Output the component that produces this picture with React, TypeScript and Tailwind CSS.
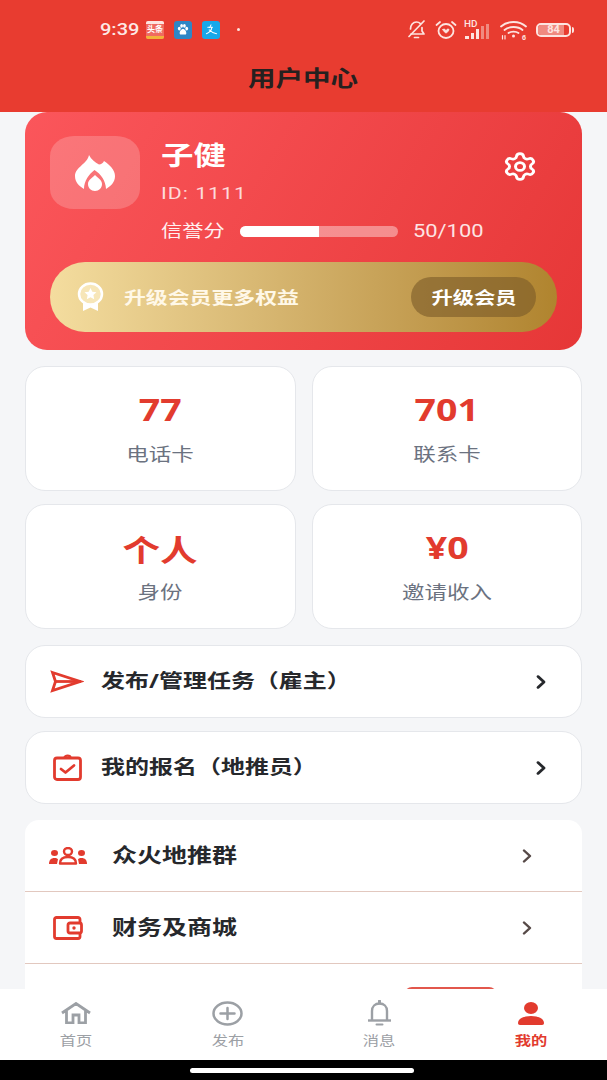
import { ChevronRight, Settings } from "lucide-react";
import { JSX } from "react";

const cjk = "font-['Noto_Sans','Noto_Sans_CJK_SC',sans-serif]";
// the screenshot is stretched sideways, text needs the same stretch
const wideLeft = "inline-block origin-left scale-x-125 whitespace-nowrap";
const wideCenter = "inline-block scale-x-125 whitespace-nowrap";

const StatusIcons = () => (
  <div className="flex items-center text-white">
    <svg width="19" height="19" viewBox="0 0 19 19" fill="none" stroke="#fde4e0" strokeWidth="1.700" strokeLinecap="round" strokeLinejoin="round">
      <path d="M3.500 9c0-4 2.500-7 6-7 1.600 0 2.900.6 3.900 1.600M15 7.500V11l2 3H4" />
      <path d="M7.500 17.500h4M2 16.500 17 1" />
    </svg>
    <svg className="ml-[9px]" width="22" height="20" viewBox="0 0 22 20" fill="none" stroke="#fde4e0" strokeWidth="1.800" strokeLinecap="round">
      <ellipse cx="11" cy="11" rx="7.500" ry="7" />
      <path d="M1.500 5 5 2M20.500 5 17 2" />
      <path d="M8 9.500c1.200-1 2.200 0 3 1 .8-1 1.800-2 3-1-.5 2-2 3-3 3.500-1-.5-2.500-1.500-3-3.500Z" fill="#fde4e0" strokeWidth="1" />
    </svg>
    <div className="relative ml-[7px] h-[20px] w-[28px]">
      <span className="absolute left-0 top-[-1px] inline-block origin-left scale-x-110 text-[9px] font-medium leading-[10px] text-[#fde4e0] font-['Roboto',sans-serif]">HD</span>
      <div className="absolute bottom-[1px] left-[1px] flex items-end gap-[2px]">
        <span className="h-[3px] w-[4px] bg-[#fde4e0]" />
        <span className="h-[6px] w-[3px] bg-[#fde4e0]" />
        <span className="h-[10px] w-[3px] bg-[#fde4e0]" />
        <span className="h-[13px] w-[3px] bg-[#f08a80]" />
        <span className="h-[15px] w-[3px] bg-[#f08a80]" />
      </div>
    </div>
    <svg className="ml-[8px]" width="27" height="20" viewBox="0 0 27 20" fill="none" stroke="#fde4e0" strokeWidth="1.800" strokeLinecap="round">
      <path d="M1 6.500c6.500-6 18.500-6 25 0M4.500 10c4.500-4 13.500-4 18 0M8.500 13c2.500-1.800 7.500-1.800 10 0" />
      <circle cx="13.500" cy="16" r="1.500" fill="#fde4e0" stroke="none" />
      <text x="22" y="19.500" fontSize="7" fontWeight="700" fill="#fde4e0" stroke="none">6</text>
      <path d="M2.500 19v-3.500M5 15.500V19" strokeWidth="1.200" />
    </svg>
    <div className="ml-[9px] flex items-center">
      <div className="relative flex h-[14px] w-[35px] items-center overflow-hidden rounded-[5px] border-2 border-[#fde4e0]">
        <span className="h-full w-[26px] bg-[#f08a80]" />
        <span className="absolute inset-0 text-center text-[11px] font-bold leading-[10px] text-[#fde4e0] font-['Roboto',sans-serif]">84</span>
      </div>
      <span className="ml-[1px] h-[6px] w-[2px] rounded-r bg-[#fde4e0]" />
    </div>
  </div>
);

const StatusBar = () => (
  <div className="flex h-[58px] items-center justify-between pl-[100px] pr-[33px] pt-[1px]">
    <div className="flex items-center">
      <span className="w-[41px] text-[16px] font-medium text-[#fde9e6] font-['Roboto',sans-serif]">
        <span className={wideLeft}>9:39</span>
      </span>
      <div className="ml-[5px] flex h-[18px] w-[18px] flex-col overflow-hidden rounded-[2px] bg-[#f06a60]">
        <span className="h-[3px] bg-[#fde4e0]" />
        <span className="flex-1 text-center text-[8px] font-bold leading-[10px] text-white">头条</span>
        <span className="h-[3px] bg-[#f2b23a]" />
      </div>
      <div className="ml-[10px] flex h-[18px] w-[18px] items-center justify-center rounded-[3px] bg-[#2f86c6]">
        <svg width="14" height="13" viewBox="0 0 14 14" fill="#fff">
          <ellipse cx="3" cy="6" rx="1.500" ry="2" />
          <ellipse cx="5.500" cy="3" rx="1.500" ry="2" />
          <ellipse cx="8.500" cy="3" rx="1.500" ry="2" />
          <ellipse cx="11" cy="6" rx="1.500" ry="2" />
          <path d="M7 6.500c2 0 4 3 3.500 5-.4 1.500-2.500.8-3.500.8s-3.100.7-3.500-.8C3 9.500 5 6.500 7 6.500Z" />
        </svg>
      </div>
      <div className="ml-[10px] flex h-[18px] w-[18px] items-center justify-center rounded-[3px] bg-[#17a8ea]">
        <svg width="15" height="13" viewBox="0 0 14 14" fill="none" stroke="#fff" strokeWidth="1.100" strokeLinecap="round">
          <path d="M6.500 2 5 5M3 4.500h5M7.500 4.500C7 8 4.500 10.500 1.500 11.500M4.500 7.500c2 2 4.500 3.500 8 4" />
        </svg>
      </div>
      <span className="ml-[17px] h-[3px] w-[3px] rounded-full bg-[#fde4e0]" />
    </div>
    <StatusIcons />
  </div>
);

const FlameLogo = () => (
  <svg width="40" height="36" viewBox="0 0 40 36" fill="#fff">
    <path d="M14 0c2 4 6 7.500 10 9.500 2.200 0 4-1.200 5-3.500 6 4 11 9 11 15 0 6-4 10-9 13-.2-8-5-15-11.500-19C14 19 9 26 9 34c-5-3-9-7-9-13C0 12 12.500 9 14 0Z" />
    <path d="M20 20c2.500 2.500 7 5 7 9 0 4-3 7-7 7s-7-3-7-7c0-4 4.500-6.500 7-9Z" />
  </svg>
);

const Medal = () => (
  <svg width="27" height="30" viewBox="0 0 27 30" fill="none">
    <path d="M6 18v11l7.500-3.500L21 29V18Z" fill="#fff" />
    <ellipse cx="13.500" cy="12" rx="11.500" ry="10.500" fill="#f7e6b8" stroke="#fff" strokeWidth="2.500" />
    <path d="m13.500 6 1.800 3.800 4.200.5-3.100 2.800.8 4.100-3.700-2-3.700 2 .8-4.100-3.100-2.800 4.200-.5Z" fill="#fff" />
  </svg>
);

const ProfileCard = () => (
  <div className="rounded-[22px] bg-[linear-gradient(120deg,#fb565b,#e63737)] px-[25px] pt-[24px] pb-[18px]">
    <div className="flex">
      <div className="flex h-[73px] w-[90px] shrink-0 items-center justify-center rounded-[24px/20px] bg-white/20">
        <FlameLogo />
      </div>
      <div className="ml-[21px] flex-1">
        <div className="flex items-start justify-between">
          <div>
            <div className="text-[26px] font-bold leading-[38px] text-white">
              <span className={wideLeft}>子健</span>
            </div>
            <div className="mt-[7px] text-[17px] leading-[24px] tracking-[0.800px] text-[#fddada] font-['Roboto',sans-serif]">
              <span className={wideLeft}>ID: 1111</span>
            </div>
          </div>
          <Settings className="mr-[19px] mt-[15px] h-[31px] w-[36px]" preserveAspectRatio="none" color="#fff" strokeWidth={2} />
        </div>
        <div className="mt-[13px] flex items-center">
          <span className="w-[79px] text-[17px] leading-[26px] text-[#fff0f0]">
            <span className={wideLeft}>信誉分</span>
          </span>
          <div className="h-[11px] w-[158px] overflow-hidden rounded-full bg-white/40">
            <div className="h-full bg-white" style={{ width: "50%" }} />
          </div>
          <span className="ml-[15px] text-[17.500px] text-[#fde4e4] font-['Roboto',sans-serif]">
            <span className={wideLeft}>50/100</span>
          </span>
        </div>
      </div>
    </div>
    <div className="mt-[18px] flex h-[70px] items-center rounded-full bg-gradient-to-r from-[#f4dd9f] to-[#b0842e] pl-[27px] pr-[21px]">
      <Medal />
      <span className="ml-[20px] flex-1 text-[17.500px] font-bold text-[#fff8e8]">
        <span className={wideLeft}>升级会员更多权益</span>
      </span>
      <span className="flex h-[40px] w-[125px] items-center justify-center rounded-full bg-[#7a5a28]/60 text-[17px] font-bold text-white">
        <span className={wideCenter}>升级会员</span>
      </span>
    </div>
  </div>
);

const StatCard = ({ value, label, big }: { value: string; label: string; big?: boolean }) => (
  <div className="flex h-[125px] flex-col items-center rounded-[20px] border border-[#e5e7eb] bg-white pt-[21px]">
    <div className={`h-[44px] font-bold text-[#e23b2e] text-[30px] ${big ? "leading-[47px]" : "leading-[44px]"}`}>
      <span className={wideCenter}>{value}</span>
    </div>
    <div className="mt-[9px] text-[18px] leading-[26px] text-[#6b7280]">
      <span className={wideCenter}>{label}</span>
    </div>
  </div>
);

const SendIcon = () => (
  <svg width="34" height="23" viewBox="0 0 34 23" fill="none" stroke="#e23b2e" strokeWidth="2.800" strokeLinejoin="miter">
    <path d="M2.500 2.500 30 11.500 2.500 20.500 5.500 11.500Z" />
    <path d="M5.500 11.500H31" />
  </svg>
);

const ClipboardIcon = () => (
  <svg width="29" height="27" viewBox="0 0 29 27" fill="none" stroke="#e23b2e" strokeWidth="2.800" strokeLinecap="round" strokeLinejoin="round">
    <rect x="1.500" y="4" width="26" height="21.500" rx="2.500" />
    <path d="M11.500 3.500c0-2.500 6-2.500 6 0" strokeWidth="2.200" />
    <path d="m8 15 4.500 3.500L21 11.500" />
  </svg>
);

const GroupIcon = () => (
  <svg width="38" height="18" viewBox="0 0 38 18" fill="#e23b2e">
    <ellipse cx="5.500" cy="6" rx="3.500" ry="3" />
    <path d="M0 17c0-4 2-6 5.500-6 1.500 0 2.800.4 3.500 1.200L8 17Z" />
    <ellipse cx="32.500" cy="6" rx="3.500" ry="3" />
    <path d="M38 17c0-4-2-6-5.500-6-1.500 0-2.800.4-3.500 1.200l1 4.800Z" />
    <ellipse cx="19" cy="4.500" rx="4" ry="3.500" fill="none" stroke="#e23b2e" strokeWidth="2.400" />
    <path d="M11 16.500c0-4.500 3-6.500 8-6.500s8 2 8 6.500Z" fill="none" stroke="#e23b2e" strokeWidth="2.400" strokeLinejoin="round" />
  </svg>
);

const WalletIcon = () => (
  <svg width="30" height="24" viewBox="0 0 30 24" fill="none" stroke="#e23b2e" strokeWidth="2.800" strokeLinejoin="round">
    <path d="M27 7V3.500a2 2 0 0 0-2-2H3.500a2 2 0 0 0-2 2v17a2 2 0 0 0 2 2H25a2 2 0 0 0 2-2V17" />
    <rect x="15" y="7" width="13.500" height="10" rx="2" />
    <circle cx="21" cy="12" r="1.700" fill="#e23b2e" stroke="none" />
  </svg>
);

const ActionRow = ({ icon, label }: { icon: JSX.Element; label: string }) => (
  <div className="flex h-[73px] items-center rounded-[20px] border border-[#e5e7eb] bg-white pr-[28px]">
    <div className="flex w-[75px] justify-center pl-[7px]">{icon}</div>
    <span className="flex-1 text-[19.200px] font-bold text-[#26282c]">
      <span className={wideLeft}>{label}</span>
    </span>
    <ChevronRight className="h-[22px] w-[24px]" preserveAspectRatio="none" color="#26282c" strokeWidth={2.800} />
  </div>
);

const ListRow = ({ icon, label }: { icon: JSX.Element; label: string }) => (
  <div className="flex h-[72px] items-center border-b border-[#e2c8bf] pr-[43px]">
    <div className="flex w-[87px] justify-center pr-[1px]">{icon}</div>
    <span className="flex-1 text-[20px] font-bold text-[#26282c]">
      <span className={wideLeft}>{label}</span>
    </span>
    <ChevronRight className="h-[22px] w-[24px]" preserveAspectRatio="none" color="#574a48" strokeWidth={2.500} />
  </div>
);

const TabItem = ({ icon, label, active }: { icon: JSX.Element; label: string; active?: boolean }) => (
  <div className="flex flex-col items-center">
    <div className="flex h-[32px] items-center justify-center">{icon}</div>
    <span className={`mt-[1px] text-[13px] leading-[20px] ${active ? "font-bold text-[#e23b2e]" : "text-[#9ca0a5]"}`}>
      <span className={wideCenter}>{label}</span>
    </span>
  </div>
);

const App = () => {
  return (
    <div className={`flex h-[1080px] w-[607px] flex-col overflow-hidden bg-[#f5f6f8] ${cjk}`}>
      <header className="h-[112px] shrink-0 bg-[#e83c30]">
        <StatusBar />
        <h1 className="text-center text-[22px] font-bold leading-[36px] text-[#26201f] mt-[1px]">
          <span className={wideCenter}>用户中心</span>
        </h1>
      </header>

      <main className="flex-1 overflow-hidden px-[25px]">
        <ProfileCard />

        <div className="mt-[16px] grid grid-cols-2 gap-x-[16px] gap-y-[13px]">
          <StatCard value="77" label="电话卡" />
          <StatCard value="701" label="联系卡" />
          <StatCard value="个人" label="身份" big />
          <StatCard value="¥0" label="邀请收入" />
        </div>

        <div className="mt-[16px] flex flex-col gap-[13px]">
          <ActionRow icon={<SendIcon />} label="发布/管理任务（雇主）" />
          <ActionRow icon={<ClipboardIcon />} label="我的报名（地推员）" />
        </div>

        <div className="mt-[16px] overflow-hidden rounded-t-[14px] bg-white">
          <ListRow icon={<GroupIcon />} label="众火地推群" />
          <ListRow icon={<WalletIcon />} label="财务及商城" />
          <div className="flex h-[72px] justify-end pr-[85px] pt-[23px]">
            <span className="h-[30px] w-[93px] rounded-[8px] bg-[#e2574c]" />
          </div>
        </div>
      </main>

      <nav className="grid h-[71px] shrink-0 grid-cols-4 bg-white pt-[8px]">
        <TabItem
          label="首页"
          icon={
            <svg width="30" height="22" viewBox="0 0 30 22" fill="none" stroke="#9ca0a5" strokeWidth="2.800" strokeLinejoin="miter">
              <path d="M1 11 15 1.500 29 11M5.500 8.500V21h6.500v-8h6v8h6.500V8.500" />
            </svg>
          }
        />
        <TabItem
          label="发布"
          icon={
            <svg width="31" height="25" viewBox="0 0 31 25" fill="none" stroke="#9ca0a5" strokeWidth="2.500" strokeLinecap="round">
              <ellipse cx="15.500" cy="12.500" rx="14" ry="11" />
              <path d="M8.500 12.500h14M15.500 7v11" />
            </svg>
          }
        />
        <TabItem
          label="消息"
          icon={
            <svg width="25" height="26" viewBox="0 0 25 26" fill="none" stroke="#9ca0a5" strokeWidth="2.400" strokeLinejoin="round">
              <path d="M5 20V11c0-4.500 3.200-7.500 7.500-7.500S20 6.500 20 11v9" />
              <path d="M1 20.500h23" />
              <path d="M12.500 3V1" strokeLinecap="round" strokeWidth="3" />
              <path d="M9.500 24.500h6" strokeLinecap="round" strokeWidth="2" />
            </svg>
          }
        />
        <TabItem
          label="我的"
          active
          icon={
            <svg width="26" height="23" viewBox="0 0 26 23" fill="#e23b2e">
              <ellipse cx="13" cy="6" rx="7" ry="6" />
              <path d="M0 21c0-4.500 6-7 13-7s13 2.500 13 7c0 1.300-.7 2-2 2H2c-1.300 0-2-.7-2-2Z" />
            </svg>
          }
        />
      </nav>

      <div className="flex h-[20px] shrink-0 items-center justify-center bg-black pr-[3px]">
        <span className="h-[5px] w-[224px] rounded-full bg-white" />
      </div>
    </div>
  );
};

export default App;
